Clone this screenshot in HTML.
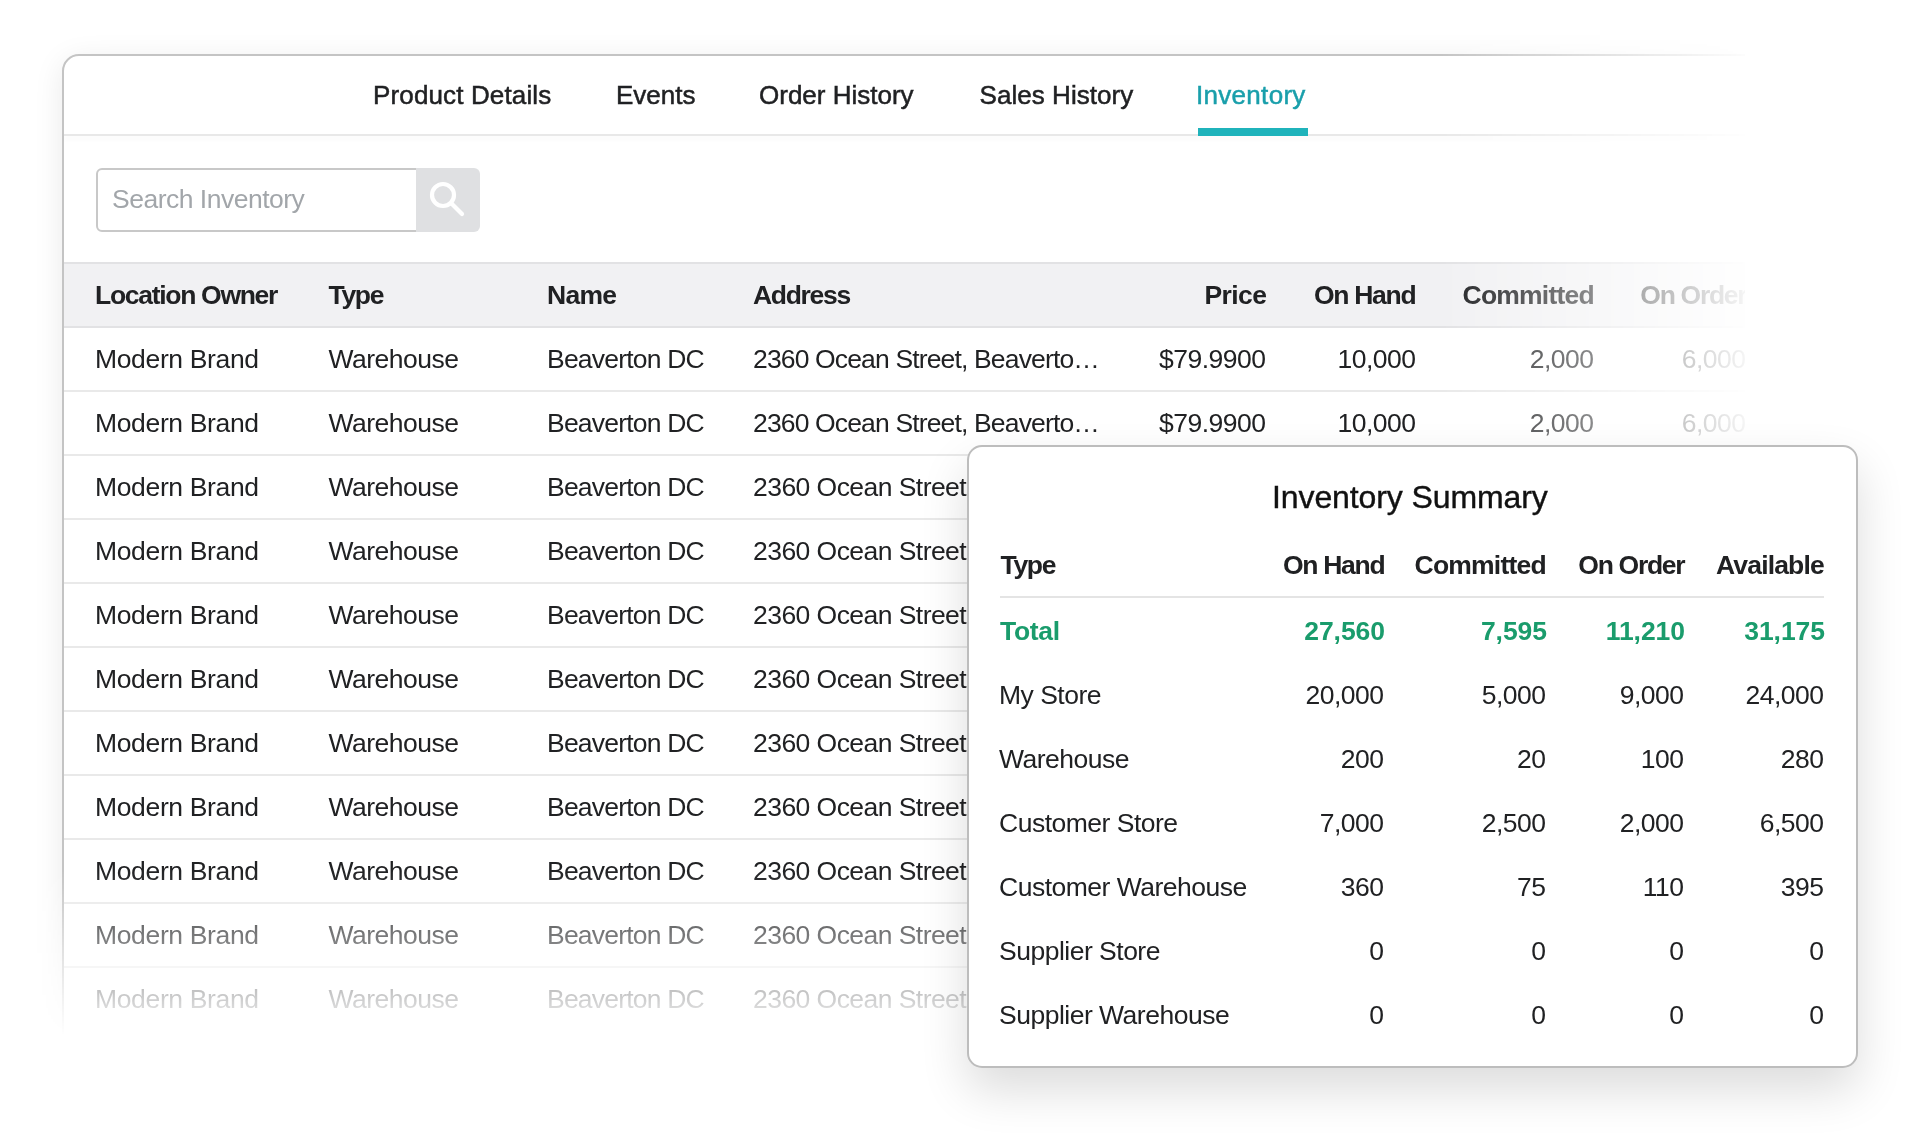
<!DOCTYPE html>
<html><head><meta charset="utf-8"><title>Inventory</title>
<style>
*{margin:0;padding:0;box-sizing:border-box}
html,body{width:1920px;height:1138px;overflow:hidden;background:#fff}
body{font-family:"Liberation Sans",sans-serif;color:#202123;position:relative}
.t{position:absolute;white-space:nowrap}
#fadeX{position:absolute;left:0;top:0;width:1920px;height:1138px;
 -webkit-mask-image:linear-gradient(to right,#000 0,#000 1440px,rgba(0,0,0,0) 1760px);
 mask-image:linear-gradient(to right,#000 0,#000 1440px,rgba(0,0,0,0) 1760px)}
#fadeY{position:absolute;left:0;top:0;width:1920px;height:1138px;
 -webkit-mask-image:linear-gradient(to bottom,#000 0,#000 870px,rgba(0,0,0,0) 1036px);
 mask-image:linear-gradient(to bottom,#000 0,#000 870px,rgba(0,0,0,0) 1036px)}
#clip{position:absolute;left:0;top:0;width:1745px;height:1138px;overflow:hidden}
#card{position:absolute;left:62px;top:54px;width:1800px;height:1100px;border:2px solid #c4c4c4;border-radius:17px;background:#fff;
 box-shadow:0 6px 30px rgba(0,0,0,0.085)}
#tabline{position:absolute;left:64px;top:134px;width:1700px;height:2px;background:#e8e8e8;box-shadow:0 3px 5px rgba(0,0,0,0.05)}
#uline{position:absolute;left:1198px;top:128px;width:110px;height:8px;background:#1fb3bb}
#search{position:absolute;left:96px;top:168px;width:326px;height:64px;border:2px solid #c8c8c8;border-radius:6px;background:#fff}
#sbtn{position:absolute;left:416px;top:168px;width:64px;height:64px;background:#dfe0e2;border-radius:0 6px 6px 0}
#thead{position:absolute;left:64px;top:262px;width:1700px;height:66px;background:#f1f1f3;border-top:2px solid #e2e2e4;border-bottom:2px solid #e2e2e4}
.hl{position:absolute;left:64px;width:1700px;height:2px;background:#e9e9e9}
#pop{position:absolute;will-change:transform;left:967px;top:445px;width:891px;height:623px;border:2px solid #bdbdbd;border-radius:15px;background:#fff;
 box-shadow:0 22px 48px rgba(0,0,0,0.14)}
#popline{position:absolute;left:1000px;top:596px;width:824px;height:2px;background:#e4e4e4}
</style></head><body>
<div id="fadeX"><div id="fadeY"><div id="clip">
<div id="card"></div>
<div id="tabline"></div>
<div class="t" style="top:79.5px;font-size:26px;line-height:31px;color:#202123;letter-spacing:0.14px;-webkit-text-stroke:0.5px currentColor;left:373px;">Product Details</div><div class="t" style="top:79.5px;font-size:26px;line-height:31px;color:#202123;-webkit-text-stroke:0.5px currentColor;left:616px;">Events</div><div class="t" style="top:79.5px;font-size:26px;line-height:31px;color:#202123;-webkit-text-stroke:0.5px currentColor;left:759px;">Order History</div><div class="t" style="top:79.5px;font-size:26px;line-height:31px;color:#202123;letter-spacing:0.05px;-webkit-text-stroke:0.5px currentColor;left:979.5px;">Sales History</div><div class="t" style="top:79.5px;font-size:26px;line-height:31px;color:#199fab;letter-spacing:0.3px;-webkit-text-stroke:0.5px currentColor;left:1196px;">Inventory</div>
<div id="uline"></div>
<div id="search"></div><div id="sbtn"><svg width="64" height="64" viewBox="0 0 64 64" style="position:absolute;left:0;top:0"><circle cx="27" cy="27" r="11" fill="none" stroke="#fff" stroke-width="4.2"/><line x1="35.5" y1="35.5" x2="46" y2="46" stroke="#fff" stroke-width="4.2" stroke-linecap="round"/></svg></div>
<div class="t" style="top:182.8px;font-size:26.5px;line-height:32px;color:#a2a6aa;letter-spacing:-0.5px;left:112px;">Search Inventory</div>
<div id="thead"></div>
<div class="hl" style="top:390px"></div><div class="hl" style="top:454px"></div><div class="hl" style="top:518px"></div><div class="hl" style="top:582px"></div><div class="hl" style="top:646px"></div><div class="hl" style="top:710px"></div><div class="hl" style="top:774px"></div><div class="hl" style="top:838px"></div><div class="hl" style="top:902px"></div><div class="hl" style="top:966px"></div>
<div class="t" style="top:279.3px;font-size:26.5px;line-height:32px;font-weight:700;color:#202123;letter-spacing:-1.3px;left:95px;">Location Owner</div><div class="t" style="top:279.3px;font-size:26.5px;line-height:32px;font-weight:700;color:#202123;letter-spacing:-1.3px;left:328.5px;">Type</div><div class="t" style="top:279.3px;font-size:26.5px;line-height:32px;font-weight:700;color:#202123;letter-spacing:-0.7px;left:547px;">Name</div><div class="t" style="top:279.3px;font-size:26.5px;line-height:32px;font-weight:700;color:#202123;letter-spacing:-1.3px;left:753px;">Address</div><div class="t" style="top:279.3px;font-size:26.5px;line-height:32px;font-weight:700;color:#202123;letter-spacing:-0.55px;left:1266.5px;transform:translateX(-100%);">Price</div><div class="t" style="top:279.3px;font-size:26.5px;line-height:32px;font-weight:700;color:#202123;letter-spacing:-1.3px;left:1415.3px;transform:translateX(-100%);">On Hand</div><div class="t" style="top:279.3px;font-size:26.5px;line-height:32px;font-weight:700;color:#202123;letter-spacing:-0.8px;left:1593.8px;transform:translateX(-100%);">Committed</div><div class="t" style="top:279.3px;font-size:26.5px;line-height:32px;font-weight:700;color:#202123;letter-spacing:-1.3px;left:1746.3px;transform:translateX(-100%);">On Order</div><div class="t" style="top:343.0px;font-size:26.5px;line-height:32px;letter-spacing:-0.35px;left:95px;">Modern Brand</div><div class="t" style="top:343.0px;font-size:26.5px;line-height:32px;letter-spacing:-0.5px;left:328.5px;">Warehouse</div><div class="t" style="top:343.0px;font-size:26.5px;line-height:32px;letter-spacing:-0.8px;left:547px;">Beaverton DC</div><div class="t" style="top:343.0px;font-size:26.5px;line-height:32px;letter-spacing:-0.85px;left:753px;">2360 Ocean Street, Beaverto…</div><div class="t" style="top:343.0px;font-size:26.5px;line-height:32px;letter-spacing:-0.5px;left:1265.5px;transform:translateX(-100%);">$79.9900</div><div class="t" style="top:343.0px;font-size:26.5px;line-height:32px;letter-spacing:-0.5px;left:1415.5px;transform:translateX(-100%);">10,000</div><div class="t" style="top:343.0px;font-size:26.5px;line-height:32px;letter-spacing:-0.5px;left:1593.5px;transform:translateX(-100%);">2,000</div><div class="t" style="top:343.0px;font-size:26.5px;line-height:32px;letter-spacing:-0.5px;left:1745.5px;transform:translateX(-100%);">6,000</div><div class="t" style="top:407.0px;font-size:26.5px;line-height:32px;letter-spacing:-0.35px;left:95px;">Modern Brand</div><div class="t" style="top:407.0px;font-size:26.5px;line-height:32px;letter-spacing:-0.5px;left:328.5px;">Warehouse</div><div class="t" style="top:407.0px;font-size:26.5px;line-height:32px;letter-spacing:-0.8px;left:547px;">Beaverton DC</div><div class="t" style="top:407.0px;font-size:26.5px;line-height:32px;letter-spacing:-0.85px;left:753px;">2360 Ocean Street, Beaverto…</div><div class="t" style="top:407.0px;font-size:26.5px;line-height:32px;letter-spacing:-0.5px;left:1265.5px;transform:translateX(-100%);">$79.9900</div><div class="t" style="top:407.0px;font-size:26.5px;line-height:32px;letter-spacing:-0.5px;left:1415.5px;transform:translateX(-100%);">10,000</div><div class="t" style="top:407.0px;font-size:26.5px;line-height:32px;letter-spacing:-0.5px;left:1593.5px;transform:translateX(-100%);">2,000</div><div class="t" style="top:407.0px;font-size:26.5px;line-height:32px;letter-spacing:-0.5px;left:1745.5px;transform:translateX(-100%);">6,000</div><div class="t" style="top:471.0px;font-size:26.5px;line-height:32px;letter-spacing:-0.35px;left:95px;">Modern Brand</div><div class="t" style="top:471.0px;font-size:26.5px;line-height:32px;letter-spacing:-0.5px;left:328.5px;">Warehouse</div><div class="t" style="top:471.0px;font-size:26.5px;line-height:32px;letter-spacing:-0.8px;left:547px;">Beaverton DC</div><div class="t" style="top:471.0px;font-size:26.5px;line-height:32px;letter-spacing:-0.55px;left:753px;">2360 Ocean Street, Beaverton</div><div class="t" style="top:535.0px;font-size:26.5px;line-height:32px;letter-spacing:-0.35px;left:95px;">Modern Brand</div><div class="t" style="top:535.0px;font-size:26.5px;line-height:32px;letter-spacing:-0.5px;left:328.5px;">Warehouse</div><div class="t" style="top:535.0px;font-size:26.5px;line-height:32px;letter-spacing:-0.8px;left:547px;">Beaverton DC</div><div class="t" style="top:535.0px;font-size:26.5px;line-height:32px;letter-spacing:-0.55px;left:753px;">2360 Ocean Street, Beaverton</div><div class="t" style="top:599.0px;font-size:26.5px;line-height:32px;letter-spacing:-0.35px;left:95px;">Modern Brand</div><div class="t" style="top:599.0px;font-size:26.5px;line-height:32px;letter-spacing:-0.5px;left:328.5px;">Warehouse</div><div class="t" style="top:599.0px;font-size:26.5px;line-height:32px;letter-spacing:-0.8px;left:547px;">Beaverton DC</div><div class="t" style="top:599.0px;font-size:26.5px;line-height:32px;letter-spacing:-0.55px;left:753px;">2360 Ocean Street, Beaverton</div><div class="t" style="top:663.0px;font-size:26.5px;line-height:32px;letter-spacing:-0.35px;left:95px;">Modern Brand</div><div class="t" style="top:663.0px;font-size:26.5px;line-height:32px;letter-spacing:-0.5px;left:328.5px;">Warehouse</div><div class="t" style="top:663.0px;font-size:26.5px;line-height:32px;letter-spacing:-0.8px;left:547px;">Beaverton DC</div><div class="t" style="top:663.0px;font-size:26.5px;line-height:32px;letter-spacing:-0.55px;left:753px;">2360 Ocean Street, Beaverton</div><div class="t" style="top:727.0px;font-size:26.5px;line-height:32px;letter-spacing:-0.35px;left:95px;">Modern Brand</div><div class="t" style="top:727.0px;font-size:26.5px;line-height:32px;letter-spacing:-0.5px;left:328.5px;">Warehouse</div><div class="t" style="top:727.0px;font-size:26.5px;line-height:32px;letter-spacing:-0.8px;left:547px;">Beaverton DC</div><div class="t" style="top:727.0px;font-size:26.5px;line-height:32px;letter-spacing:-0.55px;left:753px;">2360 Ocean Street, Beaverton</div><div class="t" style="top:791.0px;font-size:26.5px;line-height:32px;letter-spacing:-0.35px;left:95px;">Modern Brand</div><div class="t" style="top:791.0px;font-size:26.5px;line-height:32px;letter-spacing:-0.5px;left:328.5px;">Warehouse</div><div class="t" style="top:791.0px;font-size:26.5px;line-height:32px;letter-spacing:-0.8px;left:547px;">Beaverton DC</div><div class="t" style="top:791.0px;font-size:26.5px;line-height:32px;letter-spacing:-0.55px;left:753px;">2360 Ocean Street, Beaverton</div><div class="t" style="top:855.0px;font-size:26.5px;line-height:32px;letter-spacing:-0.35px;left:95px;">Modern Brand</div><div class="t" style="top:855.0px;font-size:26.5px;line-height:32px;letter-spacing:-0.5px;left:328.5px;">Warehouse</div><div class="t" style="top:855.0px;font-size:26.5px;line-height:32px;letter-spacing:-0.8px;left:547px;">Beaverton DC</div><div class="t" style="top:855.0px;font-size:26.5px;line-height:32px;letter-spacing:-0.55px;left:753px;">2360 Ocean Street, Beaverton</div><div class="t" style="top:919.0px;font-size:26.5px;line-height:32px;letter-spacing:-0.35px;left:95px;">Modern Brand</div><div class="t" style="top:919.0px;font-size:26.5px;line-height:32px;letter-spacing:-0.5px;left:328.5px;">Warehouse</div><div class="t" style="top:919.0px;font-size:26.5px;line-height:32px;letter-spacing:-0.8px;left:547px;">Beaverton DC</div><div class="t" style="top:919.0px;font-size:26.5px;line-height:32px;letter-spacing:-0.55px;left:753px;">2360 Ocean Street, Beaverton</div><div class="t" style="top:983.0px;font-size:26.5px;line-height:32px;letter-spacing:-0.35px;left:95px;">Modern Brand</div><div class="t" style="top:983.0px;font-size:26.5px;line-height:32px;letter-spacing:-0.5px;left:328.5px;">Warehouse</div><div class="t" style="top:983.0px;font-size:26.5px;line-height:32px;letter-spacing:-0.8px;left:547px;">Beaverton DC</div><div class="t" style="top:983.0px;font-size:26.5px;line-height:32px;letter-spacing:-0.55px;left:753px;">2360 Ocean Street, Beaverton</div>
</div></div></div>
<div id="pop"></div>
<div id="popline"></div>
<div class="t" style="top:477.9px;font-size:32px;line-height:38px;color:#111;letter-spacing:-0.1px;-webkit-text-stroke:0.4px currentColor;left:1272px;">Inventory Summary</div><div class="t" style="top:549.1px;font-size:26.5px;line-height:32px;font-weight:700;letter-spacing:-1.3px;left:1000.5px;">Type</div><div class="t" style="top:549.1px;font-size:26.5px;line-height:32px;font-weight:700;letter-spacing:-1.3px;left:1384.3px;transform:translateX(-100%);">On Hand</div><div class="t" style="top:549.1px;font-size:26.5px;line-height:32px;font-weight:700;letter-spacing:-0.8px;left:1545.8px;transform:translateX(-100%);">Committed</div><div class="t" style="top:549.1px;font-size:26.5px;line-height:32px;font-weight:700;letter-spacing:-1.3px;left:1684.3px;transform:translateX(-100%);">On Order</div><div class="t" style="top:549.1px;font-size:26.5px;line-height:32px;font-weight:700;letter-spacing:-0.85px;left:1823.8px;transform:translateX(-100%);">Available</div><div class="t" style="top:614.6px;font-size:26.5px;line-height:32px;font-weight:700;color:#1a9c6c;letter-spacing:-0.3px;left:1000px;">Total</div><div class="t" style="top:614.6px;font-size:26.5px;line-height:32px;font-weight:700;color:#1a9c6c;letter-spacing:-0.05px;left:1385.0px;transform:translateX(-100%);">27,560</div><div class="t" style="top:614.6px;font-size:26.5px;line-height:32px;font-weight:700;color:#1a9c6c;letter-spacing:-0.05px;left:1547.0px;transform:translateX(-100%);">7,595</div><div class="t" style="top:614.6px;font-size:26.5px;line-height:32px;font-weight:700;color:#1a9c6c;letter-spacing:-0.05px;left:1685.0px;transform:translateX(-100%);">11,210</div><div class="t" style="top:614.6px;font-size:26.5px;line-height:32px;font-weight:700;color:#1a9c6c;letter-spacing:-0.05px;left:1825.0px;transform:translateX(-100%);">31,175</div><div class="t" style="top:678.6px;font-size:26.5px;line-height:32px;letter-spacing:-0.5px;left:999px;">My Store</div><div class="t" style="top:678.6px;font-size:26.5px;line-height:32px;letter-spacing:-0.5px;left:1383.5px;transform:translateX(-100%);">20,000</div><div class="t" style="top:678.6px;font-size:26.5px;line-height:32px;letter-spacing:-0.5px;left:1545.5px;transform:translateX(-100%);">5,000</div><div class="t" style="top:678.6px;font-size:26.5px;line-height:32px;letter-spacing:-0.5px;left:1683.5px;transform:translateX(-100%);">9,000</div><div class="t" style="top:678.6px;font-size:26.5px;line-height:32px;letter-spacing:-0.5px;left:1823.5px;transform:translateX(-100%);">24,000</div><div class="t" style="top:742.6px;font-size:26.5px;line-height:32px;letter-spacing:-0.5px;left:999px;">Warehouse</div><div class="t" style="top:742.6px;font-size:26.5px;line-height:32px;letter-spacing:-0.5px;left:1383.5px;transform:translateX(-100%);">200</div><div class="t" style="top:742.6px;font-size:26.5px;line-height:32px;letter-spacing:-0.5px;left:1545.5px;transform:translateX(-100%);">20</div><div class="t" style="top:742.6px;font-size:26.5px;line-height:32px;letter-spacing:-0.5px;left:1683.5px;transform:translateX(-100%);">100</div><div class="t" style="top:742.6px;font-size:26.5px;line-height:32px;letter-spacing:-0.5px;left:1823.5px;transform:translateX(-100%);">280</div><div class="t" style="top:806.6px;font-size:26.5px;line-height:32px;letter-spacing:-0.5px;left:999px;">Customer Store</div><div class="t" style="top:806.6px;font-size:26.5px;line-height:32px;letter-spacing:-0.5px;left:1383.5px;transform:translateX(-100%);">7,000</div><div class="t" style="top:806.6px;font-size:26.5px;line-height:32px;letter-spacing:-0.5px;left:1545.5px;transform:translateX(-100%);">2,500</div><div class="t" style="top:806.6px;font-size:26.5px;line-height:32px;letter-spacing:-0.5px;left:1683.5px;transform:translateX(-100%);">2,000</div><div class="t" style="top:806.6px;font-size:26.5px;line-height:32px;letter-spacing:-0.5px;left:1823.5px;transform:translateX(-100%);">6,500</div><div class="t" style="top:870.6px;font-size:26.5px;line-height:32px;letter-spacing:-0.5px;left:999px;">Customer Warehouse</div><div class="t" style="top:870.6px;font-size:26.5px;line-height:32px;letter-spacing:-0.5px;left:1383.5px;transform:translateX(-100%);">360</div><div class="t" style="top:870.6px;font-size:26.5px;line-height:32px;letter-spacing:-0.5px;left:1545.5px;transform:translateX(-100%);">75</div><div class="t" style="top:870.6px;font-size:26.5px;line-height:32px;letter-spacing:-0.5px;left:1683.5px;transform:translateX(-100%);">110</div><div class="t" style="top:870.6px;font-size:26.5px;line-height:32px;letter-spacing:-0.5px;left:1823.5px;transform:translateX(-100%);">395</div><div class="t" style="top:934.6px;font-size:26.5px;line-height:32px;letter-spacing:-0.5px;left:999px;">Supplier Store</div><div class="t" style="top:934.6px;font-size:26.5px;line-height:32px;letter-spacing:-0.5px;left:1383.5px;transform:translateX(-100%);">0</div><div class="t" style="top:934.6px;font-size:26.5px;line-height:32px;letter-spacing:-0.5px;left:1545.5px;transform:translateX(-100%);">0</div><div class="t" style="top:934.6px;font-size:26.5px;line-height:32px;letter-spacing:-0.5px;left:1683.5px;transform:translateX(-100%);">0</div><div class="t" style="top:934.6px;font-size:26.5px;line-height:32px;letter-spacing:-0.5px;left:1823.5px;transform:translateX(-100%);">0</div><div class="t" style="top:998.6px;font-size:26.5px;line-height:32px;letter-spacing:-0.5px;left:999px;">Supplier Warehouse</div><div class="t" style="top:998.6px;font-size:26.5px;line-height:32px;letter-spacing:-0.5px;left:1383.5px;transform:translateX(-100%);">0</div><div class="t" style="top:998.6px;font-size:26.5px;line-height:32px;letter-spacing:-0.5px;left:1545.5px;transform:translateX(-100%);">0</div><div class="t" style="top:998.6px;font-size:26.5px;line-height:32px;letter-spacing:-0.5px;left:1683.5px;transform:translateX(-100%);">0</div><div class="t" style="top:998.6px;font-size:26.5px;line-height:32px;letter-spacing:-0.5px;left:1823.5px;transform:translateX(-100%);">0</div>
</body></html>
